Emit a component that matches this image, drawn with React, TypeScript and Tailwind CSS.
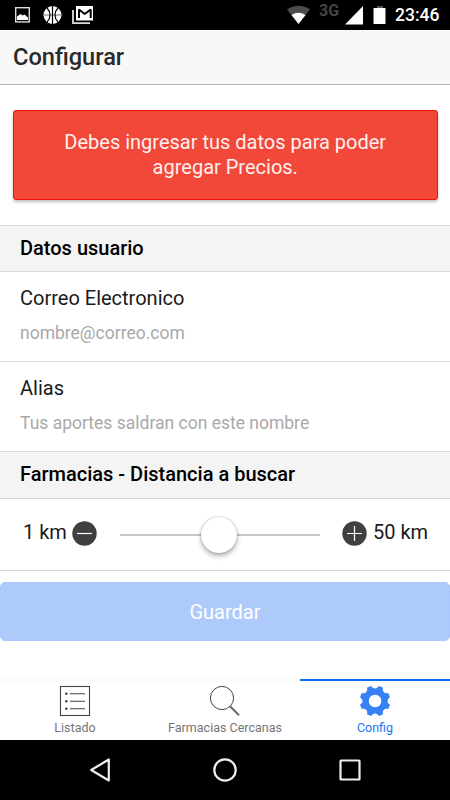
import React, { useState } from "react";
import { IoIosSettings } from "react-icons/io";

const tabs = [
  { name: "Listado", Icon: ListIcon },
  { name: "Farmacias Cercanas", Icon: SearchIcon },
  { name: "Config", Icon: GearIcon },
];

const fields = [
  { label: "Correo Electronico", placeholder: "nombre@correo.com", type: "email" },
  { label: "Alias", placeholder: "Tus aportes saldran con este nombre", type: "text" },
];

export default function App() {
  const [active, setActive] = useState("Config");

  return (
    <div className="flex h-[800px] w-[450px] flex-col overflow-hidden bg-white font-['Roboto',sans-serif] text-black">
      <StatusBar />
      <header className="flex h-[55px] items-center border-b border-[#b2b2b2] bg-[#f8f8f8] pl-[13px]">
        <h1 className="text-[23.6px] font-medium leading-[30px] text-[#2a2a2a]">Configurar</h1>
      </header>

      <main className="flex flex-1 flex-col">
        <div className="ml-[13px] mr-[12.5px] mt-[25px] flex h-[90px] items-center justify-center rounded-[3px] border border-[#f01408] bg-[#f1483a] text-center text-[20px] leading-[25px] text-[#fff0ee] shadow-[0_2px_3px_rgba(0,0,0,0.25)]">
          <p>
            Debes ingresar tus datos para poder
            <br />
            agregar Precios.
          </p>
        </div>

        <Divider className="mt-[25px] h-[47px]">Datos usuario</Divider>
        {fields.map((field, i) => (
          <label
            key={field.label}
            className={i === 0 ? "flex h-[90px] flex-col border-b border-[#dedede] px-5 pt-[13px]" : "flex h-[89px] flex-col px-5 pt-[13px]"}
          >
            <span className="text-[20px] leading-[26px] text-[#1a1a1a]">{field.label}</span>
            <input
              type={field.type}
              placeholder={field.placeholder}
              className="mt-[9px] h-[26px] w-full text-[17.5px] leading-[26px] outline-none placeholder:text-[#a9a9a9]"
            />
          </label>
        ))}
        <Divider className="h-[48px]">Farmacias - Distancia a buscar</Divider>

        <div className="flex h-[72px] items-center border-b border-[#d4d4d4] pl-[23px] pr-[22px] text-[20px] text-[#1a1a1a]">
          <span className="mb-[5px] w-[49px] whitespace-nowrap">1 km</span>
          <RoundIcon />
          <div className="relative ml-[23px] mr-[22px] h-[2px] flex-1 bg-[#c8c8c8]">
            <div className="absolute -top-[17px] left-[81px] h-[36px] w-[36px] rounded-full bg-white shadow-[0_3px_5px_rgba(0,0,0,0.3),0_0_2px_rgba(0,0,0,0.3)]" />
          </div>
          <RoundIcon plus />
          <span className="mb-[5px] ml-[6px] w-[55px] whitespace-nowrap">50 km</span>
        </div>

        <button className="mt-[11px] h-[59px] w-full rounded-[5px] border border-[#a9c8fb] bg-[#aecafb] text-[20px] text-white">
          Guardar
        </button>
      </main>

      <nav className="grid h-[61px] grid-cols-3">
        {tabs.map(({ name, Icon }) => (
          <button
            key={name}
            onClick={() => setActive(name)}
            className={
              active === name
                ? "flex flex-col items-center border-t-2 border-[#0d6ff5] pt-[4px] text-[#1a76f5]"
                : "flex flex-col items-center border-t-2 border-[#fafafa] pt-[4px] text-[#757575]"
            }
          >
            <Icon />
            <span className="mt-[3px] text-[12.5px] leading-[16px]">{name}</span>
          </button>
        ))}
      </nav>

      <div className="flex h-[60px] items-center justify-center bg-black">
        <svg width="300" height="60" viewBox="0 0 300 60" fill="none" stroke="#eee" strokeWidth="2.2" strokeLinejoin="round">
          <path d="M16.2 30 L33.8 19.5 V40.5 Z" />
          <circle cx="150" cy="30" r="10.7" />
          <rect x="265.5" y="20.5" width="19" height="19" rx="0.5" />
        </svg>
      </div>
    </div>
  );
}

function Divider({ children, className }: { children: React.ReactNode; className: string }) {
  return (
    <h2 className={`${className} flex items-center border-y border-[#d8d8d8] bg-[#f4f4f4] pb-[2px] pl-5 text-[20px] font-medium`}>
      {children}
    </h2>
  );
}

function StatusBar() {
  return (
    <div className="flex h-[30px] items-center bg-black text-white">
      <svg width="100" height="30" viewBox="0 0 100 30" fill="none">
        <rect x="15.7" y="7.7" width="13.6" height="14.2" stroke="#ddd" strokeWidth="1.4" />
        <path d="M17 20v-3.5l3.5-2.5 2 1.5 2-1 3.5 3V20z" fill="#fff" />
        <circle cx="52.5" cy="15" r="9" fill="#fff" />
        <g stroke="#000" strokeWidth="1.2">
          <path d="M43 15h19" stroke="#888" />
          <path d="M52.5 6v18" />
          <path d="M47 8c4 4 4 10 0 14M58 8c-4 4-4 10 0 14" />
        </g>
        <path d="M73 10v13.2h17" stroke="#ddd" strokeWidth="1.8" />
        <rect x="76" y="6" width="17" height="14.5" fill="#fff" />
        <path d="M79 18V9.5L84.700 14l6-4.500V18" stroke="#000" strokeWidth="2" strokeLinejoin="bevel" />
      </svg>
      <svg className="ml-auto" width="120" height="30" viewBox="0 0 120 30">
        <path d="M18 9.5Q29.5 2 41 9.5L29.5 24Z" fill="#4d4d4d" />
        <path d="M22.5 15Q29.5 10.5 36.5 15L29.5 24Z" fill="#fff" />
        <text x="50" y="16" fontSize="16" fontWeight="700" fill="#444">3G</text>
        <path d="M94 6V24.5H76z" fill="#fff" />
        <path d="M108 6h6v2h-6z" fill="#555" />
        <path d="M104.5 8h12v16h-12z" fill="#fff" />
      </svg>
      <span className="ml-[6px] mr-[10.5px] text-[17.5px] font-medium">23:46</span>
    </div>
  );
}

function RoundIcon({ plus = false }: { plus?: boolean }) {
  return (
    <svg className="mb-[2px] shrink-0" width="25" height="25" viewBox="0 0 25 25" fill="none">
      <circle cx="12.5" cy="12.5" r="12.2" fill="#404040" />
      <path d={plus ? "M5 12.5h15M12.5 5v15" : "M5 12.5h15"} stroke="#fff" strokeWidth="1.2" />
    </svg>
  );
}

function ListIcon() {
  return (
    <svg width="32" height="32" viewBox="0 0 32 32" fill="none" stroke="#444" strokeWidth="1.1">
      <rect x="1.5" y="1.5" width="29" height="29" />
      <path d="M11 8.7h15M11 16.2h15M11 23.7h15" />
      <g fill="#444" stroke="none">
        <circle cx="7.3" cy="8.7" r="1.3" />
        <circle cx="7.3" cy="16.2" r="1.3" />
        <circle cx="7.3" cy="23.7" r="1.3" />
      </g>
    </svg>
  );
}

function SearchIcon() {
  return (
    <svg width="32" height="32" viewBox="0 0 32 32" fill="none" stroke="#444">
      <circle cx="13" cy="13" r="11.6" strokeWidth="1" />
      <path d="M21 21.2L30 30.3" stroke="#666" strokeWidth="2" />
    </svg>
  );
}

function GearIcon() {
  return <IoIosSettings className="-m-1 h-10 w-10 text-[#3880f5]" />;
}
